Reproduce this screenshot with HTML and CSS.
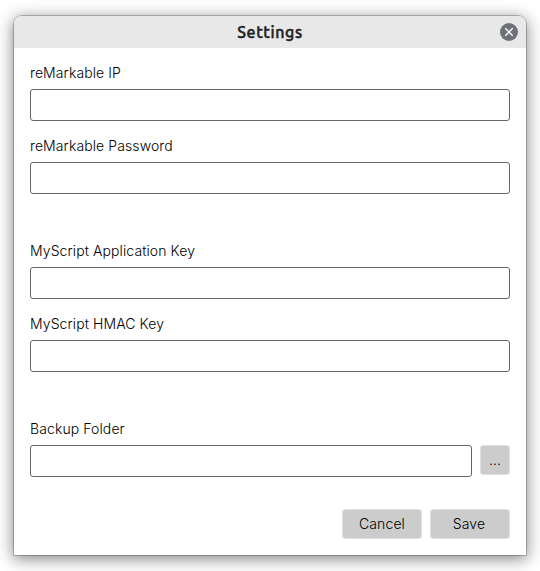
FILE: index.html
```html
<!DOCTYPE html>
<html lang="en">
<head>
<meta charset="utf-8">
<title>Settings</title>
<link rel="stylesheet" href="styles.css">
</head>
<body>
<main class="window">
  <header class="titlebar">
    <h1 class="title">Settings</h1>
    <button class="close" aria-label="Close"><svg width="18" height="18" viewBox="0 0 18 18"><path d="M5.3 5.3l7.4 7.4M12.7 5.3l-7.4 7.4" stroke="#fff" stroke-width="1.3" fill="none"/></svg></button>
  </header>
  <form class="form">
    <label class="field"><span class="label">reMarkable IP</span><input class="input" type="text"></label>
    <label class="field"><span class="label">reMarkable Password</span><input class="input" type="password"></label>
    <label class="field section"><span class="label">MyScript Application Key</span><input class="input" type="text"></label>
    <label class="field"><span class="label">MyScript HMAC Key</span><input class="input" type="text"></label>
    <div class="field section">
      <span class="label">Backup Folder</span>
      <div class="row"><input class="input" type="text"><button class="button browse" type="button">...</button></div>
    </div>
    <div class="actions">
      <button class="button" type="button">Cancel</button>
      <button class="button save" type="button">Save</button>
    </div>
  </form>
</main>
</body>
</html>
```
FILE: styles.css
```css
* { box-sizing: border-box; }
body { display: flow-root; height: 100vh; margin: 0; background: #fff; font: 300 14px/20px Inter, sans-serif; letter-spacing: 0.1px; color: #000; overflow: hidden; }
.window { width: 512px; height: 539px; margin: 16px 0 0 14px; background: #fff; border-radius: 8px 8px 0 0; box-shadow: 0 0 0 1px rgba(0,0,0,.22), 0 3px 16px 1px rgba(0,0,0,.48); }
.titlebar { height: 32px; display: grid; grid-template-columns: 35px 1fr 35px; align-items: center; background: #e8e8e8; border-radius: 8px 8px 0 0; }
.title { grid-column: 2; margin: 0; text-align: center; color: #222; font: 500 16px/20px Ubuntu, "Noto Sans", sans-serif; letter-spacing: 0.6px; -webkit-text-stroke: 0.45px #222; }
.close { width: 18px; height: 18px; padding: 0; border: 0; border-radius: 50%; background: #6e7177; justify-self: center; }
.close svg { display: block; }
.form { padding: 15px 16px; }
.field { display: block; margin-bottom: 15px; }
.label { display: block; height: 20px; margin-bottom: 6px; }
.input { display: block; width: 100%; height: 32px; border: 1px solid #666; border-radius: 3px; background: #fff; outline: 0; }
.section { margin-top: 47px; }
.row { display: flex; gap: 8px; }
.button { width: 80px; height: 30px; padding: 0; border: 1px solid #e0e0e0; border-radius: 3px; background: #ccc; color: #000; font: inherit; letter-spacing: inherit; }
.browse { width: 30px; flex: none; }
.save { padding-right: 2px; }
.actions { display: flex; justify-content: flex-end; gap: 8px; margin-top: 32px; }
```
